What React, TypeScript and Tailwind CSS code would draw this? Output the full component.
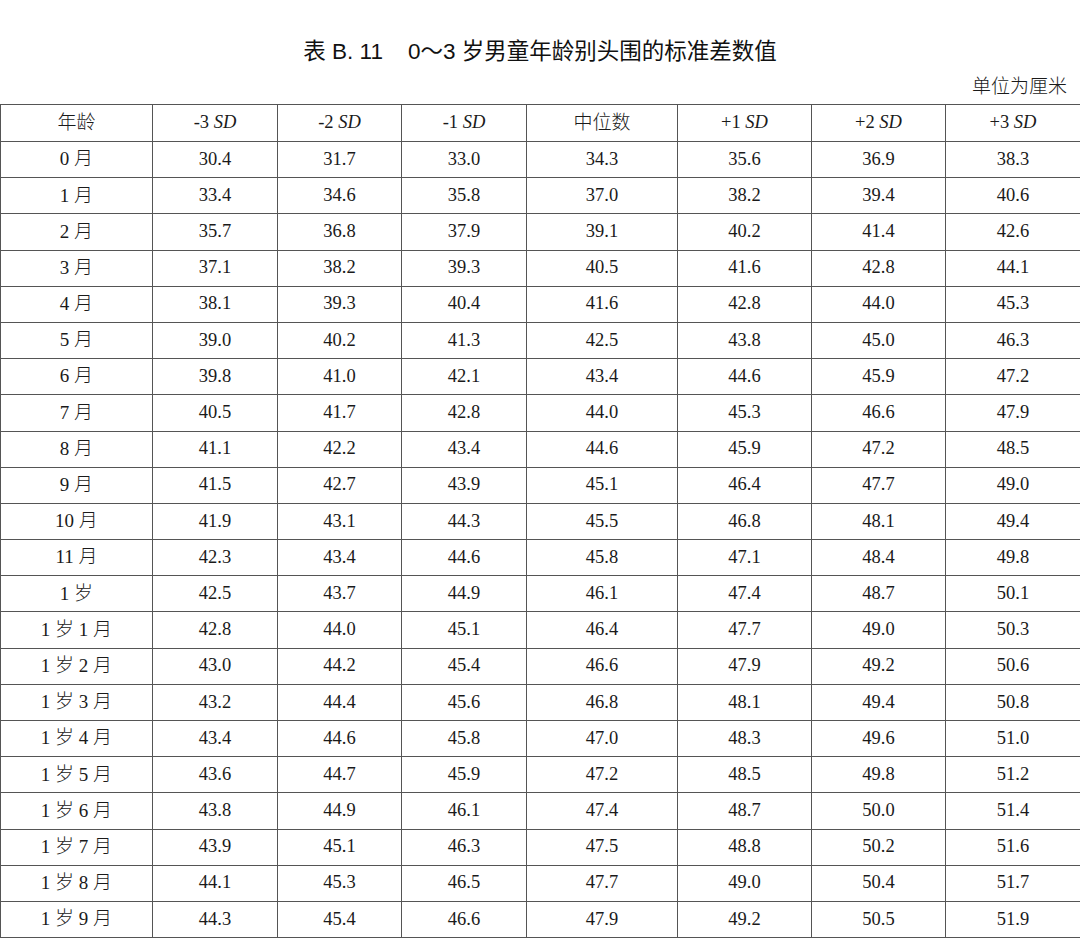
const headers = ['-3', '-2', '-1', 'mid', '+1', '+2', '+3'];

const rows: [string, string[]][] = [
  ['0 月', ['30.4', '31.7', '33.0', '34.3', '35.6', '36.9', '38.3']],
  ['1 月', ['33.4', '34.6', '35.8', '37.0', '38.2', '39.4', '40.6']],
  ['2 月', ['35.7', '36.8', '37.9', '39.1', '40.2', '41.4', '42.6']],
  ['3 月', ['37.1', '38.2', '39.3', '40.5', '41.6', '42.8', '44.1']],
  ['4 月', ['38.1', '39.3', '40.4', '41.6', '42.8', '44.0', '45.3']],
  ['5 月', ['39.0', '40.2', '41.3', '42.5', '43.8', '45.0', '46.3']],
  ['6 月', ['39.8', '41.0', '42.1', '43.4', '44.6', '45.9', '47.2']],
  ['7 月', ['40.5', '41.7', '42.8', '44.0', '45.3', '46.6', '47.9']],
  ['8 月', ['41.1', '42.2', '43.4', '44.6', '45.9', '47.2', '48.5']],
  ['9 月', ['41.5', '42.7', '43.9', '45.1', '46.4', '47.7', '49.0']],
  ['10 月', ['41.9', '43.1', '44.3', '45.5', '46.8', '48.1', '49.4']],
  ['11 月', ['42.3', '43.4', '44.6', '45.8', '47.1', '48.4', '49.8']],
  ['1 岁', ['42.5', '43.7', '44.9', '46.1', '47.4', '48.7', '50.1']],
  ['1 岁 1 月', ['42.8', '44.0', '45.1', '46.4', '47.7', '49.0', '50.3']],
  ['1 岁 2 月', ['43.0', '44.2', '45.4', '46.6', '47.9', '49.2', '50.6']],
  ['1 岁 3 月', ['43.2', '44.4', '45.6', '46.8', '48.1', '49.4', '50.8']],
  ['1 岁 4 月', ['43.4', '44.6', '45.8', '47.0', '48.3', '49.6', '51.0']],
  ['1 岁 5 月', ['43.6', '44.7', '45.9', '47.2', '48.5', '49.8', '51.2']],
  ['1 岁 6 月', ['43.8', '44.9', '46.1', '47.4', '48.7', '50.0', '51.4']],
  ['1 岁 7 月', ['43.9', '45.1', '46.3', '47.5', '48.8', '50.2', '51.6']],
  ['1 岁 8 月', ['44.1', '45.3', '46.5', '47.7', '49.0', '50.4', '51.7']],
  ['1 岁 9 月', ['44.3', '45.4', '46.6', '47.9', '49.2', '50.5', '51.9']],
];

const cell = 'border border-[#555] text-center align-middle p-0';

export default function App() {
  return (
    <div
      className="w-[1080px] bg-white text-[#1a1a1a]"
      style={{ fontFamily: '"Liberation Serif", "Noto Sans CJK SC", serif' }}
    >
      <div className="h-[104px] flex flex-col">
        <h1
          className="pt-[37px] text-center text-[22.5px] leading-[30px] text-[#111]"
          style={{ fontFamily: '"Liberation Sans", "Noto Sans CJK SC", sans-serif' }}
        >
          表 B. 11&nbsp;&nbsp;&nbsp;&nbsp;0～3 岁男童年龄别头围的标准差数值
        </h1>
        <div className="mt-[7px] pr-[13px] text-right text-[19px] leading-[26px] font-light">单位为厘米</div>
      </div>
      <table className="w-[1080px] table-fixed border-collapse text-[18.5px]">
        <colgroup>
          <col className="w-[152px]" />
          <col className="w-[125px]" />
          <col className="w-[124px]" />
          <col className="w-[125px]" />
          <col className="w-[151px]" />
          <col className="w-[134px]" />
          <col className="w-[134px]" />
          <col className="w-[135px]" />
        </colgroup>
        <thead>
          <tr className="h-[37px]">
            <th className={`${cell} font-light text-[19px]`}>年龄</th>
            {headers.map((h) =>
              h === 'mid' ? (
                <th key={h} className={`${cell} font-light text-[19px]`}>中位数</th>
              ) : (
                <th key={h} className={`${cell} font-normal`}>
                  {h} <i>SD</i>
                </th>
              )
            )}
          </tr>
        </thead>
        <tbody>
          {rows.map(([age, vals]) => (
            <tr key={age} className="h-[36.2px]">
              <td className={`${cell} font-light text-[19px]`}>{age}</td>
              {vals.map((v, i) => (
                <td key={i} className={cell}>{v}</td>
              ))}
            </tr>
          ))}
        </tbody>
      </table>
    </div>
  );
}
